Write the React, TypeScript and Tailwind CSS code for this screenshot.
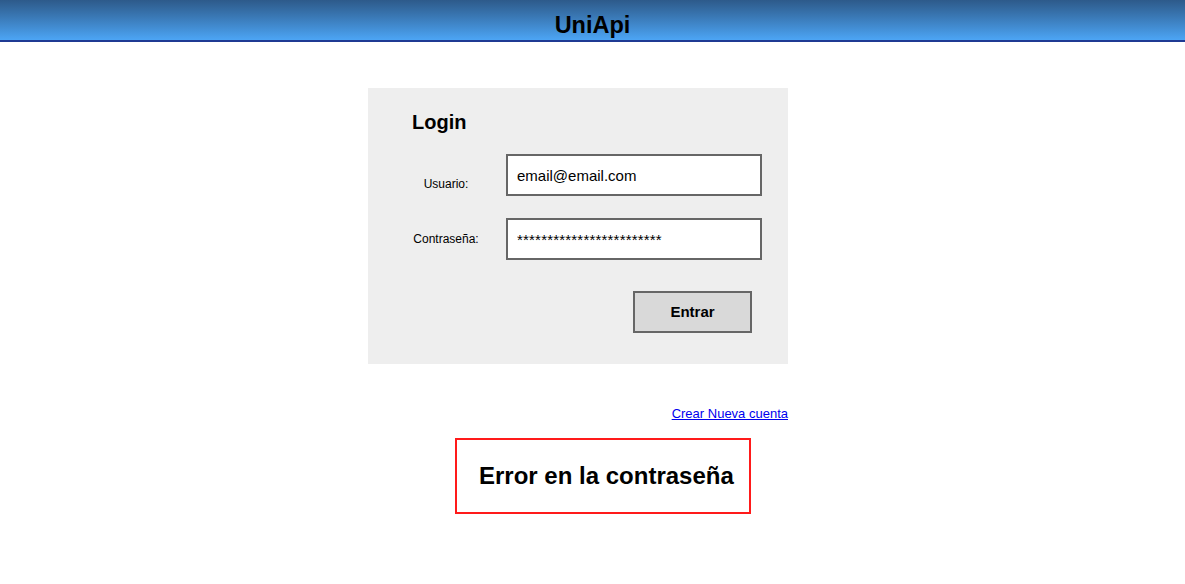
import React from "react";

const LoginPage = () => {
  return (
    <div className="min-h-[584px] bg-white text-black font-['Liberation_Sans',Arial,sans-serif]">
      <header className="h-[42px] border-b-2 border-[#1f3a93] bg-gradient-to-b from-[#2d5a8a] to-[#4ca5f5] pt-[11px] text-center">
        <h1 className="text-[23.5px] leading-[28px] font-bold">UniApi</h1>
      </header>

      <div className="ml-[368px] w-[420px] pt-[46px]">
        <div className="h-[276px] bg-[#eeeeee] pt-[22px]">
          <h2 className="ml-[44px] text-[20px] leading-[24px] font-bold">Login</h2>

          <div className="mt-[20px] flex">
            <label className="ml-[18px] w-[120px] pt-[23px] text-center text-[12px] leading-[14px]">
              Usuario:
            </label>
            <input
              type="text"
              defaultValue="email@email.com"
              className="h-[42px] w-[256px] border-2 border-[#666666] bg-white px-[9px] text-[15px] outline-none"
            />
          </div>

          <div className="mt-[22px] flex">
            <label className="ml-[18px] w-[120px] pt-[14px] text-center text-[12px] leading-[14px]">
              Contraseña:
            </label>
            <input
              type="text"
              defaultValue="************************"
              className="h-[42px] w-[256px] border-2 border-[#666666] bg-white px-[9px] text-[15px] tracking-[0.2px] outline-none"
            />
          </div>

          <div className="mt-[31px] flex justify-end pr-[36px]">
            <button className="h-[42px] w-[119px] border-2 border-[#666666] bg-[#d9d9d9] text-[15px] font-bold">
              Entrar
            </button>
          </div>
        </div>

        <div className="mt-[42px] flex justify-end">
          <a href="#" className="text-[13px] leading-[15px] text-[#0000ee] underline">
            Crear Nueva cuenta
          </a>
        </div>

        <div className="ml-[87px] mt-[17px] flex h-[76px] w-[296px] items-center border-2 border-[#ff1a1a] pl-[22px]">
          <p className="text-[24px] leading-[30px] font-bold">Error en la contraseña</p>
        </div>
      </div>
    </div>
  );
};

export default function App() {
  return <LoginPage />;
}
